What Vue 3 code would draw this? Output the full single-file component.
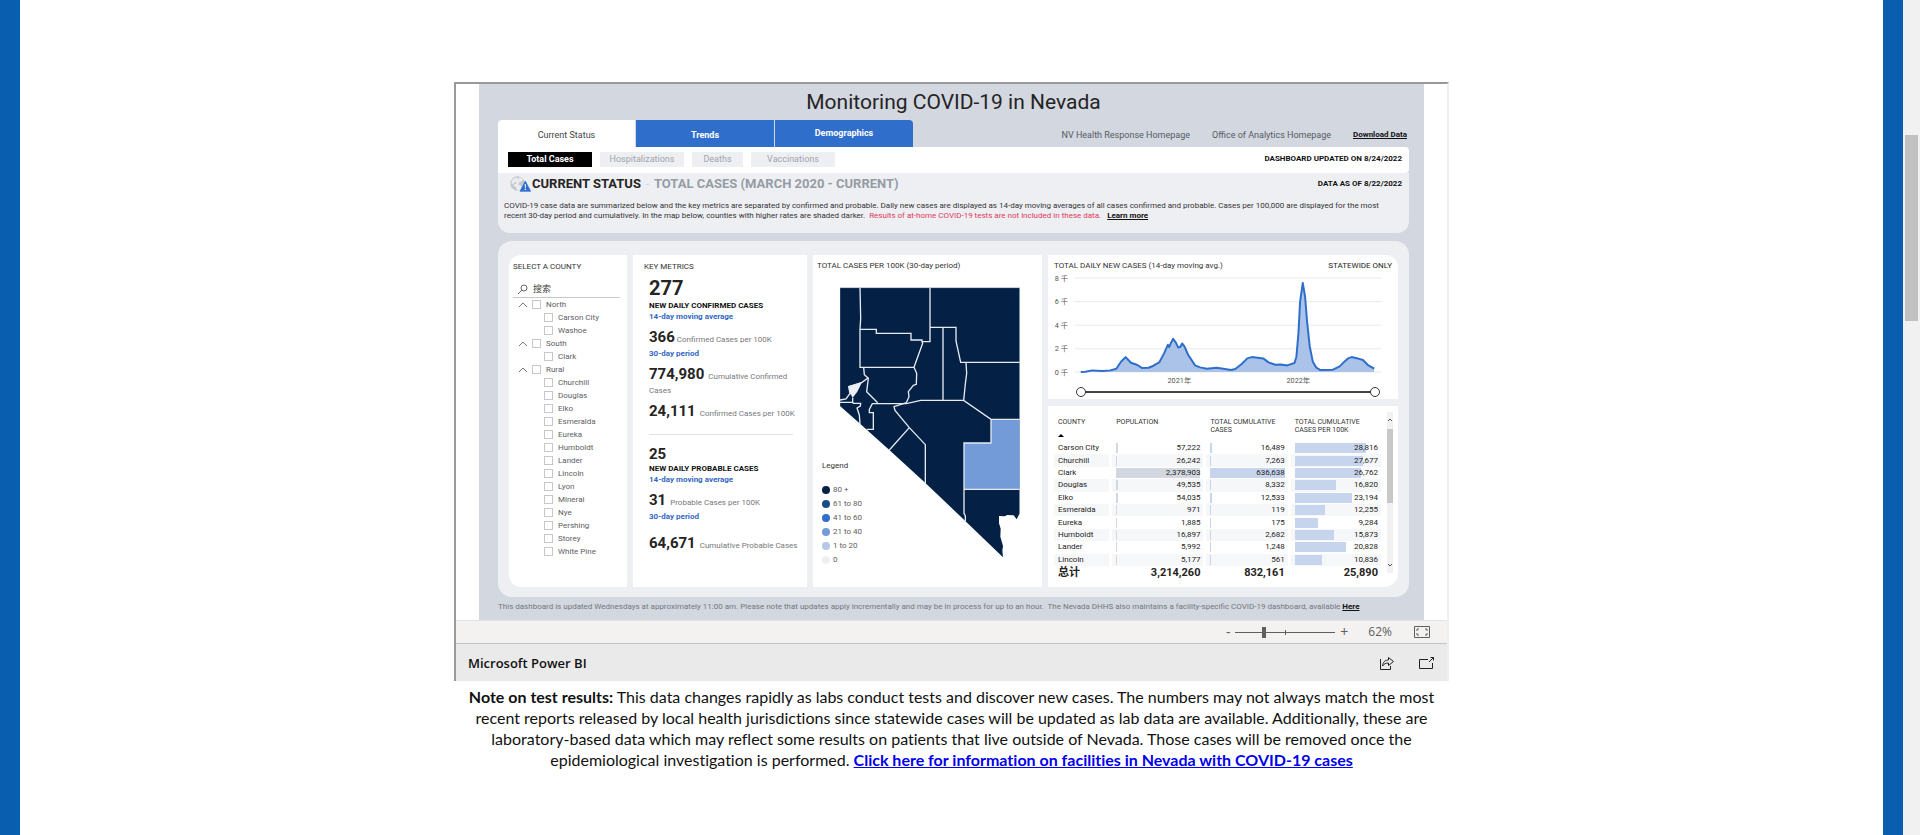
<script setup>
import { ref } from 'vue'

const regions = [
  { name: 'North', counties: ['Carson City', 'Washoe'] },
  { name: 'South', counties: ['Clark'] },
  {
    name: 'Rural',
    counties: ['Churchill', 'Douglas', 'Elko', 'Esmeralda', 'Eureka', 'Humboldt', 'Lander', 'Lincoln', 'Lyon', 'Mineral', 'Nye', 'Pershing', 'Storey', 'White Pine'],
  },
]

const legend = [
  { label: '80 +', color: '#042145' },
  { label: '61 to 80', color: '#1c4a8c' },
  { label: '41 to 60', color: '#2f6ecb' },
  { label: '21 to 40', color: '#739bd8' },
  { label: '1 to 20', color: '#b4c8e6' },
  { label: '0', color: '#eeeff3' },
]

const rows = [
  ['Carson City', 57222, 16489, 28816],
  ['Churchill', 26242, 7263, 27677],
  ['Clark', 2378903, 636638, 26762],
  ['Douglas', 49535, 8332, 16820],
  ['Elko', 54035, 12533, 23194],
  ['Esmeralda', 971, 119, 12255],
  ['Eureka', 1885, 175, 9284],
  ['Humboldt', 16897, 2682, 15873],
  ['Lander', 5992, 1248, 20828],
  ['Lincoln', 5177, 561, 10836],
]
const scale = [0, 2378903, 636638, 33600]
const fmt = (n) => n.toLocaleString('en-US')
const bar = (n, i) => ({ width: Math.max(1, (n / scale[i]) * 100) + '%' })

const search = ref('')
const zoomLevel = ref(28)
const rangeStart = ref(0)
const rangeEnd = ref(100)
</script>

<template>
  <div class="page">
    <main class="content">
      <section class="frame">
        <div class="stage">
          <div class="report">
            <h1>Monitoring COVID-19 in Nevada</h1>
            <header class="top">
              <nav class="tabs">
                <button class="tab active">Current Status</button>
                <button class="tab">Trends</button>
                <button class="tab last">Demographics</button>
              </nav>
              <div class="links">
                <a href="#">NV Health Response Homepage</a>
                <a href="#">Office of Analytics Homepage</a>
                <a href="#" class="strong">Download Data</a>
              </div>
            </header>
            <div class="strip">
              <button class="pill on">Total Cases</button>
              <button class="pill">Hospitalizations</button>
              <button class="pill small">Deaths</button>
              <button class="pill">Vaccinations</button>
              <b class="stamp">DASHBOARD UPDATED ON 8/24/2022</b>
            </div>
            <section class="intro">
              <div class="headline">
                <svg class="globe" viewBox="0 0 63 48" width="21" height="16">
                  <circle cx="23" cy="23" r="22" fill="#c3c8ce" />
                  <path d="M8 10 20 4 27 9 20 18 12 19 10 26 4 22ZM27 3l12 5-3 7-8 3-3 8 10 4-2 9-9 8-5-12-9-7 9-6 2-8 6-3Z" fill="#e9edf1" />
                  <path d="M46 15 62 46H30Z" fill="#2f6ecb" stroke="#2f6ecb" stroke-width="2" stroke-linejoin="round" />
                  <path d="M44 25h4l-1 11h-2ZM44 38h4v4h-4Z" fill="#fff" />
                </svg>
                <h2>CURRENT STATUS</h2>
                <span class="dash">-</span>
                <h3>TOTAL CASES (MARCH 2020 - CURRENT)</h3>
                <b class="stamp">DATA AS OF 8/22/2022</b>
              </div>
              <p>
                COVID-19 case data are summarized below and the key metrics are separated by confirmed and probable. Daily new cases are displayed as 14-day moving averages of all cases confirmed and probable. Cases per 100,000 are displayed for the most<br />
                recent 30-day period and cumulatively. In the map below, counties with higher rates are shaded darker. <em>Results of at-home COVID-19 tests are not included in these data.</em> <a href="#">Learn more</a>
              </p>
            </section>

            <section class="panel">
              <div class="card counties">
                <h4>SELECT A COUNTY</h4>
                <label class="search">
                  <svg viewBox="0 0 10 10" width="10" height="10" fill="none" stroke="#666"><circle cx="6" cy="4" r="3" /><path d="M4 6 0 10" /></svg>
                  <input v-model="search" type="text" placeholder="搜索" aria-label="搜索" />
                </label>
                <ul>
                  <li v-for="r in regions" :key="r.name">
                    <div class="line">
                      <svg viewBox="0 0 10 6" width="10" height="6" fill="none" stroke="#777"><path d="M1 5 5 1 9 5" /></svg>
                      <label><input type="checkbox" />{{ r.name }}</label>
                    </div>
                    <ul>
                      <li v-for="c in r.counties" :key="c" class="line child">
                        <label><input type="checkbox" />{{ c }}</label>
                      </li>
                    </ul>
                  </li>
                </ul>
              </div>

              <div class="card metrics">
                <h4>KEY METRICS</h4>
                <div class="group">
                  <strong class="big">277</strong>
                  <b class="name">NEW DAILY CONFIRMED CASES</b>
                  <span class="blue">14-day moving average</span>
                  <p class="first"><strong>366</strong> Confirmed Cases per 100K</p>
                  <span class="blue under">30-day period</span>
                  <p class="wrap"><strong>774,980</strong>&nbsp; Cumulative Confirmed Cases</p>
                  <p class="after"><strong>24,111</strong> &nbsp;Confirmed Cases per 100K</p>
                </div>
                <div class="group second">
                  <strong class="mid">25</strong>
                  <b class="name">NEW DAILY PROBABLE CASES</b>
                  <span class="blue">14-day moving average</span>
                  <p class="first"><strong>31</strong> &nbsp;Probable Cases per 100K</p>
                  <span class="blue under">30-day period</span>
                  <p class="lastp"><strong>64,671</strong>&nbsp; Cumulative Probable Cases</p>
                </div>
              </div>

              <div class="card map">
                <h4>TOTAL CASES PER 100K (30-day period)</h4>
                <svg class="nevada" viewBox="111 135 558 825" width="186" height="275">
                  <path d="M120 143H659V820L650 838 641 826 622 825 614 829 597 828 597 850 602 866 601 890 609 918 607 932 609 952 495 842 377 730 268 630 182 553 120 498Z" fill="#042145" />
                  <path d="M573 538H659V748H492V609H573Z" fill="#739bd8" />
                  <path d="M186 427 172 455 158 473 150 460 146 438 160 434Z" fill="#eeeff3" />
                  <g fill="none" stroke="#e6ebf2" stroke-width="4">
                    <path d="M120 498V143H659V820" stroke-width="1" />
                    <path d="M180 143 182 235 180 268V382H342" />
                    <path d="M180 268H229V280H333V300H366V305H390V143" />
                    <path d="M390 262H468V303L482 367H659" />
                    <path d="M429 262V481M366 305 368 310 342 382 350 400 349 433 340 436 325 455 327 470 319 488" />
                    <path d="M191 382 193 404 205 415 200 455 233 488" />
                    <path d="M205 413 186 427 146 440 150 460 138 477 120 480M158 473V487M120 487H158L160 490H182L181 498 171 504 178 525 180 552" />
                    <path d="M200 568H220V518H208V508L217 491H319L362 481H491L573 538H659M573 538V609H492V748H659M492 748V820L496 828V843" />
                    <path d="M498 367 500 400 496 432 491 481M319 488 282 500 285 511 328 563 376 614V730M328 563 268 630" />
                  </g>
                </svg>
                <div class="legend">
                  <h5>Legend</h5>
                  <ul>
                    <li v-for="l in legend" :key="l.label"><i :style="{ background: l.color }"></i>{{ l.label }}</li>
                  </ul>
                </div>
              </div>

              <div class="right">
                <div class="card trend">
                  <div class="trend-head">
                    <h4>TOTAL DAILY NEW CASES (14-day moving avg.)</h4>
                    <span>STATEWIDE ONLY</span>
                  </div>
                  <svg class="chart" viewBox="54 102 1050 334" width="350" height="111">
                    <path d="M133 114H1055M133 185H1055M133 256H1055M133 327H1055M133 397H1055" stroke="#eaeaea" stroke-width="3" />
                    <path d="M151 397 165 396 185 392 215 394 240 392 258 387 272 366 286 352 302 369 320 375 336 385 355 384 370 378 388 367 402 340 413 315 417 322 423 308 429 297 438 310 444 323 451 321 456 311 463 320 474 345 495 377 510 383 530 387 560 384 580 387 603 391 616 388 636 372 652 356 666 352 700 356 716 368 736 375 753 374 772 377 794 370 800 350 806 280 811 185 819 129 826 170 832 245 840 320 849 365 860 384 872 391 910 390 930 380 945 365 955 356 966 352 984 356 1000 361 1015 376 1034 387V397Z" fill="#abc3e8" />
                    <path d="M151 397 165 396 185 392 215 394 240 392 258 387 272 366 286 352 302 369 320 375 336 385 355 384 370 378 388 367 402 340 413 315 417 322 423 308 429 297 438 310 444 323 451 321 456 311 463 320 474 345 495 377 510 383 530 387 560 384 580 387 603 391 616 388 636 372 652 356 666 352 700 356 716 368 736 375 753 374 772 377 794 370 800 350 806 280 811 185 819 129 826 170 832 245 840 320 849 365 860 384 872 391 910 390 930 380 945 365 955 356 966 352 984 356 1000 361 1015 376 1034 387" fill="none" stroke="#2f6ecb" stroke-width="6" stroke-linejoin="round" />
                    <g font-size="22" fill="#555">
                      <text x="73" y="123">8 千</text>
                      <text x="73" y="193">6 千</text>
                      <text x="73" y="264">4 千</text>
                      <text x="73" y="335">2 千</text>
                      <text x="73" y="405">0 千</text>
                      <text x="412" y="430">2021年</text>
                      <text x="770" y="430">2022年</text>
                    </g>
                  </svg>
                  <div class="range">
                    <input v-model="rangeStart" type="range" aria-label="Start date" />
                    <input v-model="rangeEnd" type="range" aria-label="End date" />
                  </div>
                </div>

                <div class="card data">
                  <table>
                    <colgroup><col class="c1" /><col class="c2" /><col class="c3" /><col class="c4" /></colgroup>
                    <thead>
                      <tr>
                        <th>COUNTY<svg viewBox="0 0 6 3" width="6" height="3"><path d="M0 3 3 0 6 3Z" /></svg></th>
                        <th>POPULATION</th>
                        <th>TOTAL CUMULATIVE<br />CASES</th>
                        <th>TOTAL CUMULATIVE<br />CASES PER 100K</th>
                      </tr>
                    </thead>
                    <tbody>
                      <tr v-for="r in rows" :key="r[0]">
                        <td>{{ r[0] }}</td>
                        <td v-for="i in 3" :key="i" class="num">
                          <div class="cell"><i :class="{ grey: i === 1 }" :style="bar(r[i], i)"></i><span>{{ fmt(r[i]) }}</span></div>
                        </td>
                      </tr>
                    </tbody>
                    <tfoot>
                      <tr><td>总计</td><td class="num">3,214,260</td><td class="num">832,161</td><td class="num">25,890</td></tr>
                    </tfoot>
                  </table>
                  <div class="scroll">
                    <svg viewBox="0 0 6 4" width="6" height="4" fill="none" stroke="#555"><path d="M1 3 3 1 5 3" /></svg>
                    <div class="thumb"></div>
                    <svg viewBox="0 0 6 4" width="6" height="4" fill="none" stroke="#555"><path d="M1 1 3 3 5 1" /></svg>
                  </div>
                </div>
              </div>
            </section>
            <p class="foot">This dashboard is updated Wednesdays at approximately 11:00 am. Please note that updates apply incrementally and may be in process for up to an hour.&nbsp; The Nevada DHHS also maintains a facility-specific COVID-19 dashboard, available <a href="#">Here</a></p>
          </div>
        </div>
        <div class="zoombar">
          <button aria-label="Zoom out">-</button>
          <input v-model="zoomLevel" type="range" aria-label="Zoom" />
          <button aria-label="Zoom in">+</button>
          <span>62%</span>
          <button class="fit" aria-label="Fit to page">
            <svg viewBox="0 0 16 12" width="16" height="12" fill="none" stroke="#605e5c"><path d="M.5.5h15v11H.5ZM3 5V3h2M11 3h2v2M13 7v2h-2M5 9H3V7" /></svg>
          </button>
        </div>
        <footer class="brand">
          <span>Microsoft Power BI</span>
          <button aria-label="Share">
            <svg viewBox="0 0 16 14" width="16" height="14" fill="none" stroke="#222"><path d="M1.500 3v10.500h10V10M3.500 10C4 6 6 4 9.500 4V1.500L14.500 5.500 9.500 9.500V7C6.500 7 5 8 3.500 10Z" /></svg>
          </button>
          <button aria-label="Open full screen">
            <svg viewBox="0 0 16 14" width="16" height="14" fill="none" stroke="#222"><path d="M9 3.500H.5v9h13V7M10 6l4.500-4.500M11.500 1.500h3v3" /></svg>
          </button>
        </footer>
      </section>
      <p class="note">
        <b>Note on test results:</b> This data changes rapidly as labs conduct tests and discover new cases. The numbers may not always match the most<br />
        recent reports released by local health jurisdictions since statewide cases will be updated as lab data are available. Additionally, these are<br />
        laboratory-based data which may reflect some results on patients that live outside of Nevada. Those cases will be removed once the<br />
        epidemiological investigation is performed. <a href="#">Click here for information on facilities in Nevada with COVID-19 cases</a>
      </p>
    </main>
    <div class="page-scroll"><div class="page-thumb"></div></div>
  </div>
</template>

<style>
body { background: #fff; overflow: hidden; }
</style>

<style scoped>
* { box-sizing: border-box; }
.page { display: flex; min-height: 100vh; color: #252423; font: 8px/10px Roboto, "Noto Sans CJK SC", sans-serif; }
button { border: 0; padding: 0; background: none; font: inherit; color: inherit; }
h1, h2, h3, h4, h5, p, ul { margin: 0; padding: 0; font-weight: 400; list-style: none; }
a { color: inherit; }
svg { display: block; flex: none; }
.content { flex: 1; border: solid #0a5eb0; border-width: 0 20px; padding-top: 82px; }
.page-scroll { width: 17px; background: #f1f1f1; padding: 135px 2px 0; }
.page-thumb { height: 186px; background: #c1c1c1; }
.frame { max-width: 995px; margin: 0 auto; border: solid #999; border-width: 2px 2px 0; border-right-color: #eee; }
.stage { background: #fff; padding: 0 23px; }
.report { background: #d2d7e0; padding: 0 15px 0 19px; }
h1 { padding-top: 1px; font-size: 21px; line-height: 35px; text-align: center; }

.top { display: flex; justify-content: space-between; height: 27px; }
.tabs { display: flex; gap: 1px; }
.tab { width: 138px; padding-top: 2px; background: #2f6ecb; color: #fff; font-size: 9px; font-weight: 700; }
.tab.active { width: 137px; background: #fff; color: #444; font-weight: 400; border-radius: 4px 0 0 0; }
.tab.last { border-radius: 0 4px 0 0; padding: 0 0 2px; }
.links { display: flex; gap: 22px; align-items: center; padding: 2px 2px 0 0; font-size: 9px; color: #555b63; }
.links a { text-decoration: none; }
.links .strong { color: #111; font-size: 8px; font-weight: 700; text-decoration: underline; }
.strip { display: flex; gap: 8px; align-items: center; height: 26px; padding: 0 7px 2px 10px; background: #fff; border-radius: 0 4px 4px 0; }
.pill { width: 84px; height: 15px; background: #eeeff3; color: #a0a4aa; font-size: 9px; }
.pill.small { width: 51px; }
.pill.on { background: #000; color: #fff; font-weight: 700; }
.stamp { margin-left: auto; color: #111; font-size: 8px; font-weight: 700; }
.intro { background: #eeeff3; border-radius: 0 0 12px 12px; padding: 0 6px 12px; }
.headline { display: flex; align-items: center; height: 21px; padding-right: 1px; }
.globe { margin: 0 1px 0 6px; }
h2, h3 { font-size: 13px; line-height: 21px; font-weight: 700; }
.headline .dash { width: 13px; text-align: center; font-size: 13px; color: #d2d7e0; }
h3 { color: #959ca4; }
.intro p { padding-top: 7px; color: #333; white-space: nowrap; }
.intro em { margin-left: 2px; color: #e0395a; font-style: normal; }
.intro a { margin-left: 4px; font-weight: 700; color: #111; }

.panel { display: grid; grid-template-columns: 118fr 174fr 229fr 350fr; grid-auto-rows: minmax(332px, auto); gap: 6px; margin-top: 8px; padding: 14px 11px 10px; border-radius: 14px; background: #eeeff3; }
.card { background: #fff; min-width: 0; }
h4 { font-size: 8px; line-height: 10px; color: #333; white-space: nowrap; }
.counties { border-radius: 12px 0 0 12px; padding: 7px 7px 0 4px; }
.search { display: flex; align-items: center; height: 17px; margin: 9px 0 0; padding-left: 5px; gap: 5px; border-bottom: 1px solid #c8c8c8; }
.search input { width: 80px; border: 0; padding: 0; outline: 0; font: 9px/12px "Noto Sans CJK SC", sans-serif; }
.search input::placeholder { color: #444; opacity: 1; }
.line { display: flex; align-items: center; gap: 4px; height: 13px; padding-left: 5px; color: #605e66; }
.line.child { padding-left: 31px; }
.line label { display: flex; align-items: center; gap: 5px; }
.line input { appearance: none; width: 9px; height: 9px; margin: 0; border: 1px solid #c8c6c9; background: #fff; }

.metrics { padding: 7px 9px 0 11px; white-space: nowrap; }
.group { padding-left: 5px; color: #77797d; height: 162px; }
.metrics strong { color: #252423; font-size: 15px; }
.metrics .big { display: block; font-size: 20px; line-height: 24px; padding-top: 4px; }
.metrics .mid { display: block; line-height: 18px; }
.name, .blue { display: block; }
.name { color: #111; font-size: 8px; line-height: 11px; }
.blue { color: #3268c5; font-weight: 700; line-height: 11px; }
.group p { line-height: 18px; padding-top: 8px; }
.group p.first { padding-top: 6px; }
.blue.under { line-height: 10px; }
.group p.wrap { white-space: normal; line-height: 14px; padding-top: 8px; }
.group p.after { padding-top: 4px; }
.group.second { height: auto; margin-right: 5px; margin-left: 5px; padding: 10px 0 0; border-top: 1px solid #e3e3e3; }
.group p.lastp { padding-top: 12px; }

.map { position: relative; padding: 6px 4px 0; }
.nevada { margin: 14px 0 0 20px; }
.legend { position: absolute; left: 9px; bottom: 20px; color: #605e5c; }
h5 { font-size: 8px; color: #333; margin-bottom: 12px; }
.legend li { display: flex; align-items: center; gap: 3px; height: 14px; }
.legend i { width: 8px; height: 8px; border-radius: 4px; }

.right { display: grid; grid-template-rows: 144px 1fr; gap: 7px; min-width: 0; }
.trend { border-radius: 0 12px 0 0; padding-top: 6px; }
.trend-head { display: flex; justify-content: space-between; padding: 0 6px; }
.trend-head span { font-size: 8px; }
.chart { width: 100%; margin-top: 3px; }
.range { position: relative; height: 10px; margin: 2px 18px 0 28px; }
.range::before { content: ""; position: absolute; left: 5px; right: 5px; top: 4px; height: 2px; background: #444; }
.range input { position: absolute; left: 0; top: 0; width: 100%; height: 10px; margin: 0; appearance: none; background: none; pointer-events: none; }
.range input::-webkit-slider-thumb { appearance: none; width: 10px; height: 10px; border: 1px solid #333; border-radius: 5px; background: #fff; pointer-events: auto; }

.data { display: flex; gap: 3px; align-items: flex-start; padding: 6px 5px 0 3px; border-radius: 0 0 14px 0; }
table { flex: 1; table-layout: fixed; border-collapse: separate; border-spacing: 3px 0; height: 168px; }
.c1 { width: 55px; }
.c2 { width: 91px; }
.c3 { width: 81px; }
.c4 { width: 90px; }
th { position: relative; height: 30px; padding: 6px 0 0 4px; font-size: 7px; line-height: 8px; font-weight: 400; text-align: left; vertical-align: top; white-space: nowrap; color: #333; }
th svg { margin-top: 8px; }
td { padding: 0 3px 0 4px; height: 12px; line-height: 12px; white-space: nowrap; }
tbody tr:nth-child(even) td { background: #f6f7f9; }
.num { text-align: right; }
.cell { position: relative; height: 12px; }
.cell i { position: absolute; left: 0; top: 1px; height: 10px; background: #c6d4ee; }
.cell i.grey { background: #d2d7e0; }
.cell span { position: relative; }
tfoot td { font-size: 11px; line-height: 14px; font-weight: 700; }
.scroll { display: flex; flex-direction: column; align-items: center; width: 6px; height: 161px; padding: 6px 0; background: #f1f1f1; }
.thumb { width: 6px; height: 74px; margin: 7px 0 auto; background: #c8c8c8; }

.foot { padding: 5px 0 8px; color: #73787f; white-space: nowrap; }
.foot a { color: #111; font-weight: 700; }
.zoombar { display: flex; align-items: center; justify-content: flex-end; height: 24px; padding-right: 17px; border-top: 1px solid #e3e3e3; border-bottom: 1px solid #c4c4c4; background: #f3f2f1; color: #605e5c; font: 12px/16px "Open Sans", sans-serif; }
.zoombar button { width: 10px; font-size: 14px; }
.zoombar input { appearance: none; width: 100px; height: 12px; margin: 0 4px 0 2px; background: linear-gradient(#605e5c, #605e5c) 50% 50% / 1px 5px no-repeat, linear-gradient(#605e5c, #605e5c) 50% 50% / 100% 1px no-repeat; }
.zoombar input::-webkit-slider-thumb { appearance: none; width: 4px; height: 11px; background: #605e5c; }
.zoombar span { margin: 0 22px 0 19px; }
.zoombar .fit { width: 16px; }
.brand { display: flex; align-items: center; gap: 24px; height: 37px; padding: 0 12px; background: #eaeaea; color: #111; font: 600 13px/20px "Open Sans", sans-serif; }
.brand span { flex: 1; }
.note { padding-top: 5px; color: #111; font: 16px/21px Lato, sans-serif; font-variant-ligatures: none; text-align: center; }
.note a { color: #0000ee; font-weight: 700; }
</style>
